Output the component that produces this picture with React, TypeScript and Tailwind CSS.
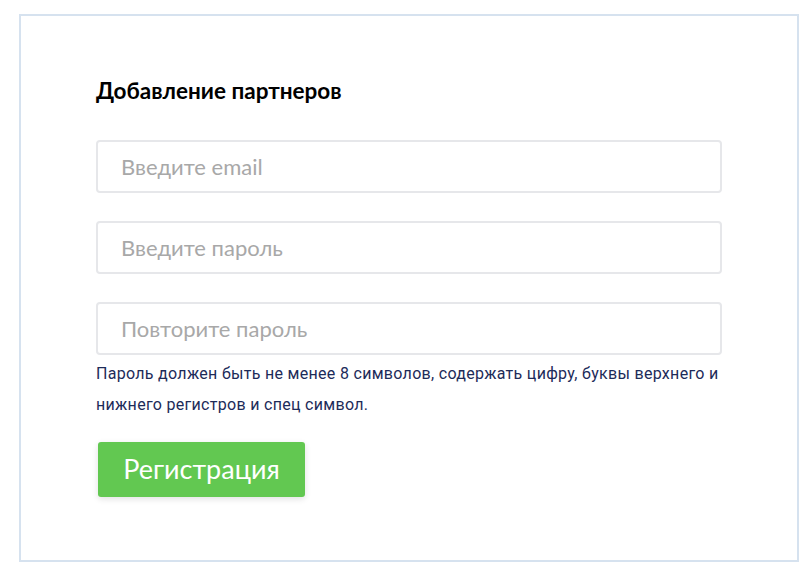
import * as React from 'react';

const fields = ['Введите email', 'Введите пароль', 'Повторите пароль'];

export default function App() {
  return (
    <div className="w-[812px] h-[582px] bg-white pt-[14px] pl-[19px]" style={{ fontFamily: 'Lato, "Noto Sans", sans-serif' }}>
      <div className="w-[780px] h-[548px] border-2 border-[#d6e2ef] bg-white pl-[75px] pt-[61px]">
        <h2 className="text-[22.5px] font-bold text-black leading-[28px]">Добавление партнеров</h2>

        <div className="mt-[35px] flex flex-col gap-[28px] w-[626px]">
          {fields.map((f) => (
            <input
              key={f}
              placeholder={f}
              className="h-[53px] w-full rounded-[4px] border-2 border-[#e6e7ea] bg-white px-[23px] text-[22px] outline-none placeholder:text-[#a8a8a8]"
            />
          ))}
        </div>

        <p
          className="mt-[3px] w-[630px] text-[16px] leading-[31px] tracking-[0.3px] text-[#1d2b59]"
          style={{ fontFamily: 'Roboto, sans-serif' }}
        >
          Пароль должен быть не менее 8 символов, содержать цифру, буквы верхнего и нижнего регистров и спец символ.
        </p>

        <button className="mt-[22px] ml-[2px] h-[55px] w-[207px] rounded-[3px] bg-[#62c851] text-[27px] text-white shadow-[0_2px_6px_rgba(0,0,0,0.12)]">
          Регистрация
        </button>
      </div>
    </div>
  );
}
